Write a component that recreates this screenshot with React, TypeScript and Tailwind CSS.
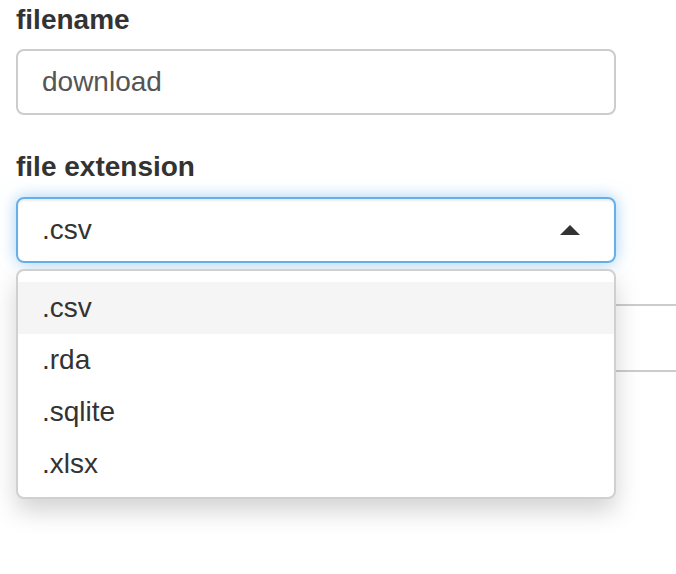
import React from "react";

export default function App() {
  const options = [".csv", ".rda", ".sqlite", ".xlsx"];
  return (
    <div className="relative w-[676px] h-[574px] overflow-hidden bg-white font-['Liberation_Sans',Arial,sans-serif] text-[#333]">
      <div className="pl-4">
        <div className="text-[28px] font-bold leading-[40px] mb-[9px]">filename</div>
        <div className="w-[600px] h-[66px] border-2 border-[#ccc] rounded-[8px] flex items-center px-[24px] text-[28px] text-[#555]">
          download
        </div>
        <div className="mt-[32px] text-[28px] font-bold leading-[40px] mb-[10px]">file extension</div>
        <div className="relative w-[600px]">
          <div className="h-[66px] border-2 border-[#66afe9] rounded-[8px] flex items-center justify-between pl-[24px] pr-[34px] text-[28px] text-[#333] shadow-[inset_0_2px_2px_rgba(0,0,0,0.075),0_0_16px_rgba(102,175,233,0.6)]">
            <span>.csv</span>
            <span className="w-0 h-0 border-x-[10px] border-x-transparent border-b-[10px] border-b-[#333]" />
          </div>
          <div className="absolute left-0 right-0 top-full mt-[6px] z-10 bg-white border-2 border-[#d0d0d0] rounded-[8px] pt-[11px] pb-[7px] shadow-[0_12px_24px_rgba(0,0,0,0.175)]">
            {options.map((o, i) => (
              <div
                key={o}
                className={`h-[52px] flex items-center pl-[24px] text-[28px] text-[#333] ${i === 0 ? "bg-[#f5f5f5]" : ""}`}
              >
                {o}
              </div>
            ))}
          </div>
        </div>
        <div className="mt-[41px] w-[760px] h-[68px] border-2 border-[#ccc] rounded-[8px]" />
      </div>
    </div>
  );
}
